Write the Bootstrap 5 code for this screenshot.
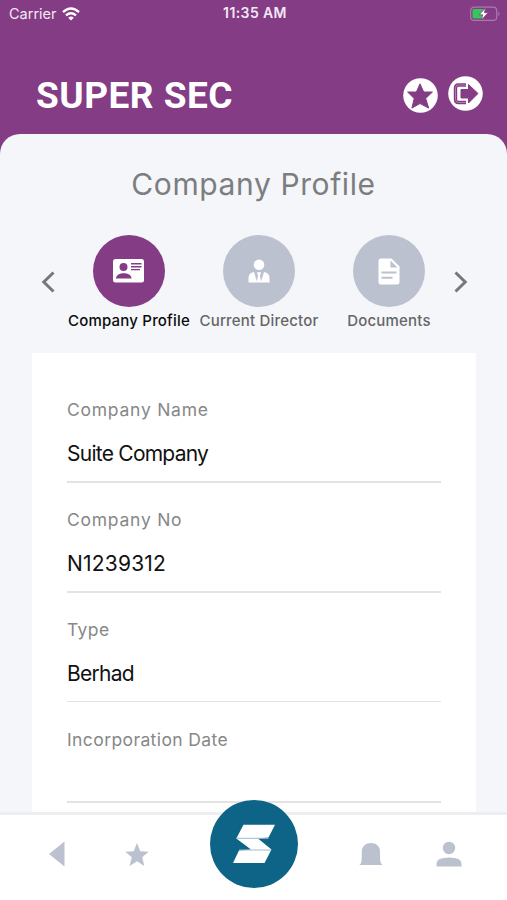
<!DOCTYPE html>
<html lang="en">
<head>
<meta charset="utf-8">
<meta name="viewport" content="width=device-width, initial-scale=1">
<title>Super Sec - Company Profile</title>
<link href="https://cdn.jsdelivr.net/npm/bootstrap@5.3.0/dist/css/bootstrap.min.css" rel="stylesheet">
<style>
body{font-family:Inter,"Liberation Sans",sans-serif;background:#843c85}
svg{display:block;flex:none}
.app{height:900px;background:#843c85}
.status{height:28px;font-size:14.5px;color:#f3e8f4;padding:0 6px 0 9px}
.status>*{flex:1 1 0}
.clock{font-weight:600;font-size:14px;letter-spacing:.4px;line-height:20px;margin-top:-2px}
.topbar{height:106px;padding:0 25px 0 36px}
.brand{font:700 37px/44px Roboto,sans-serif;color:#fff;letter-spacing:.5px;margin-top:46px}
.actions{gap:10px;margin-top:48px;margin-right:-1px}
.sheet{background:#f4f6fa;border-radius:20px 20px 0 0;min-height:0}
.page-title{font-size:30px;line-height:40px;color:#7d7d7f;margin:30px 0 31px 0;font-weight:400;letter-spacing:.6px}
.tabs{height:118px;padding-left:41px}
.tab-item{width:130px;font-size:15px;font-weight:500;color:#666;white-space:nowrap}
.tab-item.active{color:#0c0c0c}
.disc{width:72px;height:72px;background:#bbc1cf}
.active .disc{background:#843c85}
.tab-label{line-height:20px;margin-top:4px;letter-spacing:.2px}
.arrow{width:23px;padding-top:35px}
.sheet-card{margin:0 31px 0 32px;padding:45px 35px 0;min-height:0}
.field{height:110px}
.field dt{font-size:17.5px;line-height:24px;font-weight:400;color:#878787;letter-spacing:.4px}
.field dd{font-size:21px;line-height:28px;color:#111;margin:18px 0 0;height:43px;border-bottom:2px solid #e3e3e4;letter-spacing:-.75px}
.field.short dd{height:33px}
.field.thin dd{border-bottom-width:1px;height:42px}
.field dt.wide{letter-spacing:.75px}
.field dd.digits{letter-spacing:.2px}
.tabbar{height:88px;border-top:3px solid #eceef2;color:#bbc1cf}
.tabbar>*{width:78px}
.tabbar>.home-slot{width:156px}
.home{margin-top:-15px}
</style>
<script src="https://cdn.jsdelivr.net/npm/bootstrap@5.3.0/dist/js/bootstrap.bundle.min.js"></script>
</head>
<body>
<div class="app d-flex flex-column overflow-hidden">
  <div class="status d-flex align-items-center flex-shrink-0">
    <div class="d-flex align-items-center"><span>Carrier</span>
      <svg class="ms-1" width="20" height="14" viewBox="0 0 18 14" fill="none" stroke="#fff" stroke-width="2.4"><path d="M1 5.200Q9-2 17 5.200M4 8.400q5-4.300 10 0"/><path d="M6.200 10.700Q9 8.300 11.800 10.700L9 13.500z" fill="#fff" stroke="none"/></svg>
    </div>
    <div class="clock text-center">11:35 AM</div>
    <div class="d-flex justify-content-end">
      <svg width="31" height="16" viewBox="0 0 31 16"><rect x=".7" y="1.200" width="26" height="13.200" rx="3.500" fill="none" stroke="#ab79ad" stroke-width="1.200"/><path d="M28.300 5.500q2.700 2.300 0 4.600z" fill="#ab79ad"/><rect x="2.500" y="3" width="11.500" height="9.600" rx="1.500" fill="#35c759"/><path d="M15.800 1.800 9 8.800h3.700L11.300 14l7-7.300h-3.900z" fill="#fff" stroke="#843c85" stroke-width=".8"/></svg>
    </div>
  </div>
  <header class="topbar d-flex justify-content-between align-items-start flex-shrink-0">
    <div class="brand">SUPER SEC</div>
    <div class="actions d-flex align-items-start">
      <svg width="35" height="37" viewBox="0 -2 35 37"><circle cx="17.500" cy="17.500" r="17.300" fill="#fff"/><path d="M17 5.800 20.700 14h8.700l-6.700 6.500 3 9.600-8.700-4.600-8.100 4.600 2.300-9.600-6.600-6.500h8.800z" fill="#843c85" stroke="#843c85" stroke-linejoin="round"/></svg>
      <svg width="35" height="35" viewBox="0 0 35 35"><circle cx="17.500" cy="17.500" r="17.300" fill="#fff"/><path d="M18 9H10.500q-3 0-3 3v11.500q0 3 3 3H18" fill="none" stroke="#843c85" stroke-width="3.400"/><path d="M18 9H10.500q-3 0-3 3v11.500q0 3 3 3H18" fill="none" stroke="#b98fba" stroke-width=".8"/><path d="M13 13.500h7.500V8.500l9.500 9-9.500 9.500v-5H13z" fill="#843c85" stroke="#843c85" stroke-linejoin="round"/></svg>
    </div>
  </header>
  <main class="sheet flex-grow-1 d-flex flex-column">
    <h1 class="page-title text-center">Company Profile</h1>
    <nav class="tabs d-flex flex-shrink-0">
      <div class="arrow"><svg width="14" height="24" viewBox="0 0 14 24" fill="none" stroke="#777" stroke-width="3"><path d="M12.500 2.500 2.800 12l9.700 9.500"/></svg></div>
      <div class="tab-item active d-flex flex-column align-items-center">
        <div class="disc rounded-circle d-flex align-items-center justify-content-center"><svg width="32" height="24" viewBox="0 0 32 24"><rect width="31" height="23.500" rx="2.500" fill="#fff"/><g fill="#843c85"><circle cx="10.500" cy="8" r="4"/><path d="M3 19.500c0-7 15.500-7 15.500 0z"/><path d="M18 4h10.500v1.500H18zm0 3h10.500v1.500H18zm0 3h9v1.300h-9z"/></g></svg></div>
        <div class="tab-label">Company Profile</div>
      </div>
      <div class="tab-item d-flex flex-column align-items-center">
        <div class="disc rounded-circle d-flex align-items-center justify-content-center"><svg width="22" height="24" viewBox="0 0 22 24" fill="#fff"><circle cx="11" cy="5.700" r="5.300"/><path d="M.5 23.500V19q0-5 5.500-5.900l3 9.400 1-6-1.200-3.200h4.400L12 16.500l1 6 3-9.400q5.500.9 5.500 5.900v4.500z"/></svg></div>
        <div class="tab-label">Current Director</div>
      </div>
      <div class="tab-item d-flex flex-column align-items-center">
        <div class="disc rounded-circle d-flex align-items-center justify-content-center"><svg width="22" height="27" viewBox="0 0 22 27"><path d="M3 .5h10.500L21.500 8.500V24q0 2.500-2.500 2.500H3Q.5 26.500.5 24V3Q.5.500 3 .5z" fill="#fff"/><path d="M12.500 2.500v7h7zM3.500 13.500h15v2h-15zm0 5.200h11v2h-11z" fill="#bbc1cf"/></svg></div>
        <div class="tab-label">Documents</div>
      </div>
      <div class="arrow"><svg width="14" height="24" viewBox="0 0 14 24" fill="none" stroke="#777" stroke-width="3"><path d="m1.500 2.500 9.700 9.500-9.700 9.500"/></svg></div>
    </nav>
    <dl class="sheet-card bg-white flex-grow-1 mb-0 overflow-hidden">
      <div class="field"><dt class="wide">Company Name</dt><dd>Suite Company</dd></div>
      <div class="field"><dt class="wide">Company No</dt><dd class="digits">N1239312</dd></div>
      <div class="field thin"><dt>Type</dt><dd>Berhad</dd></div>
      <div class="field short"><dt>Incorporation Date</dt><dd></dd></div>
    </dl>
  </main>
  <footer class="tabbar bg-white d-flex justify-content-center flex-shrink-0">
    <div class="d-flex justify-content-center pt-4 pe-1"><svg width="18" height="28" viewBox="0 0 18 28" fill="currentColor"><path d="M1 15 16.500 2.500v25z"/></svg></div>
    <div class="d-flex justify-content-center pt-4"><svg width="24" height="28" viewBox="0 0 24 28" fill="currentColor"><path d="m12 4 3.300 8.200 8.400.5-6.500 5.500 2.200 8.800-7.400-4.800L4.600 27l2.200-8.800-6.500-5.500 8.400-.5z"/></svg></div>
    <div class="home-slot d-flex justify-content-center"><svg class="home" width="88" height="88" viewBox="0 0 88 88"><circle cx="44" cy="44" r="44" fill="#0e6487"/><path d="M33.500 24.700H65L58.500 37.500 48 38.500 61.500 49.500 54.500 63H23l6-12.500L41 49.500 26.300 38.500z" fill="#fff"/><path d="M26.500 38.300h32M29 50h32" stroke="#9dbdcb" stroke-width="1"/></svg></div>
    <div class="d-flex justify-content-center pt-4"><svg width="24" height="28" viewBox="0 0 24 28" fill="currentColor"><path d="M.3 26c2.500-2 2.500-4 2.500-13.500C2.800 7 7 4 12 4s9 3 9 8.500c0 9.500 0 11.500 2.700 13.500z"/></svg></div>
    <div class="d-flex justify-content-center pt-4"><svg width="26" height="28" viewBox="0 0 26 28" fill="currentColor"><circle cx="13" cy="9" r="6.200"/><path d="M.5 27.500v-3q0-6 12.500-6t12.500 6v3z"/></svg></div>
  </footer>
</div>
</body>
</html>
